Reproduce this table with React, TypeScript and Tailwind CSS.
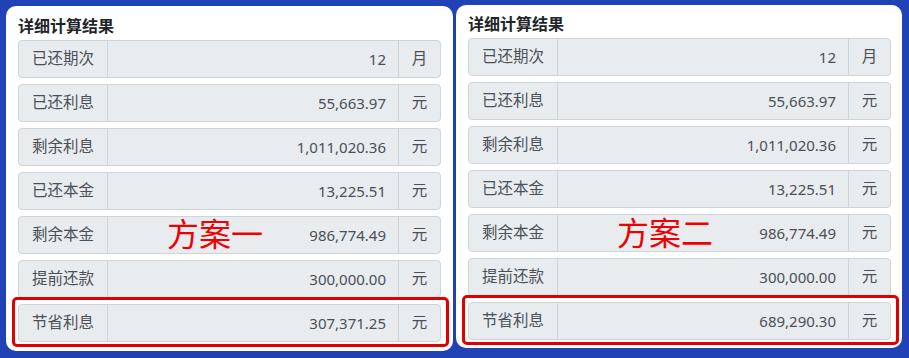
import React from 'react';

type Row = { label: string; value: string; unit: string };

const plans: { name: string; rows: Row[]; cardClass: string }[] = [
    {
        name: '方案一',
        cardClass: 'mt-[6px] ml-[6px] w-[447px] pt-[8px] pb-[9px] px-[12px]',
        rows: [
            { label: '已还期次', value: '12', unit: '月' },
            { label: '已还利息', value: '55,663.97', unit: '元' },
            { label: '剩余利息', value: '1,011,020.36', unit: '元' },
            { label: '已还本金', value: '13,225.51', unit: '元' },
            { label: '剩余本金', value: '986,774.49', unit: '元' },
            { label: '提前还款', value: '300,000.00', unit: '元' },
            { label: '节省利息', value: '307,371.25', unit: '元' },
        ],
    },
    {
        name: '方案二',
        cardClass: 'mt-[5px] ml-[3px] w-[446px] pt-[7px] pb-[8px] pl-[12px] pr-[11px]',
        rows: [
            { label: '已还期次', value: '12', unit: '月' },
            { label: '已还利息', value: '55,663.97', unit: '元' },
            { label: '剩余利息', value: '1,011,020.36', unit: '元' },
            { label: '已还本金', value: '13,225.51', unit: '元' },
            { label: '剩余本金', value: '986,774.49', unit: '元' },
            { label: '提前还款', value: '300,000.00', unit: '元' },
            { label: '节省利息', value: '689,290.30', unit: '元' },
        ],
    },
];

const ResultRow: React.FC<{ row: Row; highlight?: boolean }> = ({ row, highlight }) => (
    <div className="relative">
        <div className="flex h-[38px] rounded-[4px] border border-[#ced4da] bg-[#e9ecef] text-[15px] text-[#495057]">
            <div className="flex w-[89px] items-center justify-center border-r border-[#ced4da] text-[15.5px]">{row.label}</div>
            <div className="flex flex-1 items-center justify-end pr-[12px]">{row.value}</div>
            <div className="flex w-[42px] items-center justify-center border-l border-[#ced4da] text-[15.5px]">{row.unit}</div>
        </div>
        {highlight && (
            <div className="absolute -left-[6px] -top-[7px] -right-[8px] -bottom-[5px] rounded-[5px] border-[3px] border-[#e00000]" />
        )}
    </div>
);

const App: React.FC = () => {
    return (
        <div
            className="flex h-[358px] w-[909px] items-start bg-[#2141b6]"
            style={{ fontFamily: '"Noto Sans", "Noto Sans CJK SC", sans-serif' }}
        >
            {plans.map(plan => (
                <div key={plan.name} className={`relative rounded-[10px] bg-white ${plan.cardClass}`}>
                    <h2 className="mb-[2px] text-[16px] font-bold leading-[24px] text-[#212529]">详细计算结果</h2>
                    <div className="flex flex-col gap-[6px]">
                        {plan.rows.map((row, i) => (
                            <ResultRow key={row.label} row={row} highlight={i === plan.rows.length - 1} />
                        ))}
                    </div>
                    <div className="absolute left-[161px] top-[212px] text-[32px] leading-none text-[#f00000]">
                        {plan.name}
                    </div>
                </div>
            ))}
        </div>
    );
};

export default App;
